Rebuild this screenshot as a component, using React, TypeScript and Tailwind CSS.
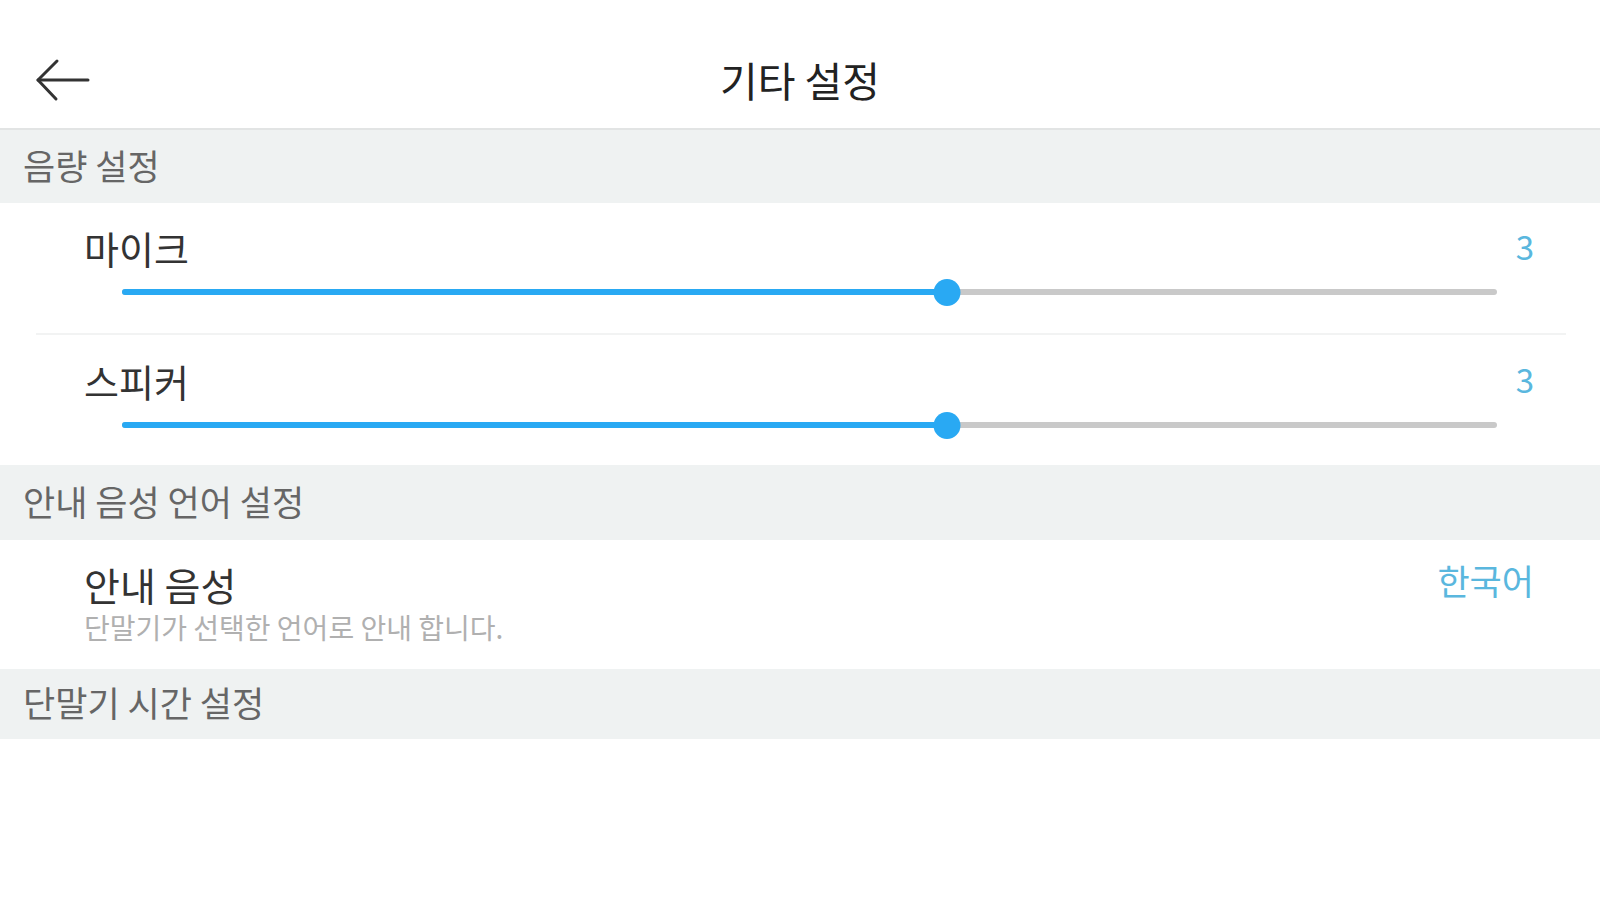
import React from "react";

const font = { fontFamily: '"Noto Sans CJK KR", "Noto Sans", sans-serif' };

function Slider({ pct }: { pct: number }) {
  return (
    <div className="relative ml-[122px] mr-[103px] h-[28px] flex items-center">
      <div className="w-full h-[6px] rounded-full bg-[#c9c9c9]" />
      <div
        className="absolute left-0 h-[6px] rounded-full bg-[#29a9f3]"
        style={{ width: `${pct}%` }}
      />
      <div
        className="absolute w-[27px] h-[27px] rounded-full bg-[#29a9f3] -translate-x-1/2"
        style={{ left: `${pct}%` }}
      />
    </div>
  );
}

function SliderRow({ label, value, pt }: { label: string; value: string; pt: string }) {
  return (
    <div className={`h-[130px] ${pt}`}>
      <div className="flex items-center justify-between pl-[84px] pr-[66px] h-[40px]">
        <span className="text-[38px] leading-[40px] text-[#333]">{label}</span>
        <span className="text-[33px] leading-[40px] text-[#5ab7de] -mt-[4px]">{value}</span>
      </div>
      <div className="mt-[10px]">
        <Slider pct={60} />
      </div>
    </div>
  );
}

function SectionHeader({ children, h }: { children: React.ReactNode; h: string }) {
  return (
    <div className={`${h} bg-[#eff2f2] flex items-center pl-[23px]`}>
      <span className="text-[35px] text-[#666] leading-[40px] -mt-[4px]">{children}</span>
    </div>
  );
}

export default function App() {
  return (
    <div className="w-[1600px] h-[900px] bg-white overflow-hidden" style={font}>
      <div className="h-[130px] pt-[30px] border-b-2 border-[#e2e4e4] relative flex items-center justify-center">
        <svg
          className="absolute left-[34px] top-[58px]"
          width="58"
          height="44"
          viewBox="0 0 58 44"
          fill="none"
          stroke="#333"
          strokeWidth="3"
          strokeLinecap="round"
          strokeLinejoin="round"
        >
          <path d="M4 22 H54" />
          <path d="M23 3 L4 22 L22 41" />
        </svg>
        <span className="text-[41px] text-[#222] leading-[44px]">기타 설정</span>
      </div>

      <SectionHeader h="h-[73px]">음량 설정</SectionHeader>

      <SliderRow label="마이크" value="3" pt="pt-[25px]" />
      <div className="h-[2px] ml-[36px] mr-[34px] bg-[#f2f3f3]" />
      <SliderRow label="스피커" value="3" pt="pt-[26px]" />

      <SectionHeader h="h-[75px]">안내 음성 언어 설정</SectionHeader>

      <div className="h-[129px] flex items-start justify-between pl-[84px] pr-[66px] pt-[21px]">
        <div className="flex flex-col">
          <span className="text-[39px] leading-[46px] text-[#333]">안내 음성</span>
          <span className="text-[28px] leading-[32px] mt-[4px] text-[#b0b0b0]">
            단말기가 선택한 언어로 안내 합니다.
          </span>
        </div>
        <span className="text-[35px] leading-[40px] text-[#5ab7de] -mt-[1px]">한국어</span>
      </div>

      <SectionHeader h="h-[70px]">단말기 시간 설정</SectionHeader>
    </div>
  );
}
